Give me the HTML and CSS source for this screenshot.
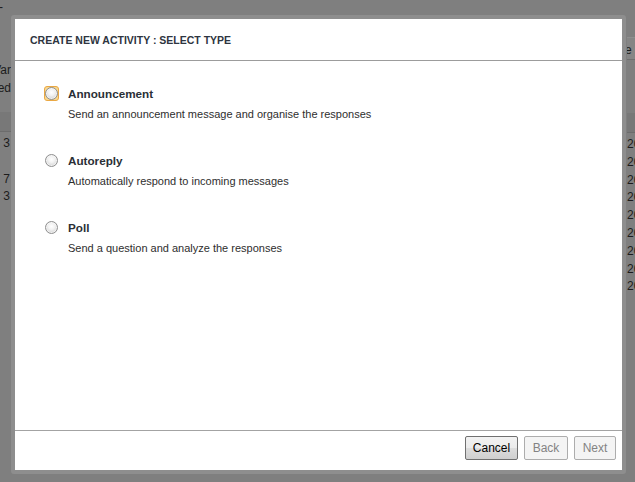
FILE: index.html
```html
<!DOCTYPE html>
<html lang="en">
<head>
<meta charset="utf-8">
<title>Create new activity</title>
<link rel="stylesheet" href="styles.css">
</head>
<body>
<div class="backdrop">
  <div class="bg-left">
    <div class="bg-dash">-</div>
    <div class="bg-text bg-var">Var</div>
    <div class="bg-text">ed</div>
    <div class="bg-band bg-band-l"></div>
    <div class="bg-row">3</div>
    <div class="bg-row bg-empty"></div>
    <div class="bg-row">7</div>
    <div class="bg-row">3</div>
  </div>
  <div class="bg-right">
    <div class="bg-box">e a</div>
    <div class="bg-band bg-band-r"></div>
    <div class="bg-row">20</div>
    <div class="bg-row">20</div>
    <div class="bg-row">20</div>
    <div class="bg-row">20</div>
    <div class="bg-row">20</div>
    <div class="bg-row">20</div>
    <div class="bg-row">20</div>
    <div class="bg-row">20</div>
    <div class="bg-row">20</div>
  </div>
</div>

<div class="dialog">
  <div class="dialog-inner">
    <div class="dialog-header">CREATE NEW ACTIVITY : SELECT TYPE</div>
    <div class="dialog-body">
      <div class="option">
        <span class="radio-wrap focused"><span class="radio"></span></span>
        <div class="option-text">
          <div class="option-title">Announcement</div>
          <div class="option-desc">Send an announcement message and organise the responses</div>
        </div>
      </div>
      <div class="option">
        <span class="radio-wrap"><span class="radio"></span></span>
        <div class="option-text">
          <div class="option-title">Autoreply</div>
          <div class="option-desc">Automatically respond to incoming messages</div>
        </div>
      </div>
      <div class="option">
        <span class="radio-wrap"><span class="radio"></span></span>
        <div class="option-text">
          <div class="option-title">Poll</div>
          <div class="option-desc">Send a question and analyze the responses</div>
        </div>
      </div>
    </div>
    <div class="dialog-footer">
      <button class="btn btn-cancel">Cancel</button>
      <button class="btn btn-back disabled">Back</button>
      <button class="btn btn-next disabled">Next</button>
    </div>
  </div>
</div>
</body>
</html>
```
FILE: styles.css
```css
html, body {
  margin: 0;
  padding: 0;
  height: 482px;
  overflow: hidden;
}
body {
  background: #7f7f7f;
  font-family: "Liberation Sans", Arial, sans-serif;
  position: relative;
}

/* dimmed page behind the modal */
.backdrop {
  display: flex;
  justify-content: space-between;
  height: 482px;
  color: #1c1c1c;
  font-size: 12px;
}
.bg-left {
  width: 11px;
  overflow: hidden;
  display: flex;
  flex-direction: column;
  align-items: flex-end;
}
.bg-right {
  width: 8px;
  overflow: hidden;
  display: flex;
  flex-direction: column;
  padding-top: 37px;
}
.bg-dash {
  height: 14px;
  line-height: 14px;
  align-self: flex-start;
  margin-left: -1px;
}
.bg-text {
  height: 18px;
  line-height: 18px;
  white-space: nowrap;
}
.bg-var {
  margin-top: 47px;
}
.bg-band {
  align-self: stretch;
  height: 19px;
  margin-bottom: 2px;
  background: #787878;
  border-bottom: 1px solid #6c6c6c;
}
.bg-band-l {
  margin-top: 15px;
}
.bg-band-r {
  margin-top: 53px;
}
.bg-row {
  height: 17.8px;
  line-height: 18px;
  white-space: nowrap;
}
.bg-left .bg-row {
  align-self: stretch;
  text-align: right;
  padding-right: 1px;
  box-sizing: border-box;
}
.bg-box {
  height: 21px;
  line-height: 24px;
  background: #858585;
  border-top: 1px solid #8e8e8e;
  border-bottom: 1px solid #6f6f6f;
  white-space: nowrap;
  margin-left: -2px;
}

/* modal dialog */
.dialog {
  position: absolute;
  left: 11px;
  top: 15px;
  width: 607px;
  height: 451px;
  border: 4px solid #8e8e8e;
  border-radius: 3px;
}
.dialog-inner {
  background: #fff;
  height: 100%;
  display: flex;
  flex-direction: column;
}
.dialog-header {
  height: 41px;
  display: flex;
  align-items: center;
  padding-left: 15px;
  border-bottom: 1px solid #9c9c9c;
  font-size: 10.5px;
  font-weight: bold;
  color: #2e3540;
}
.dialog-body {
  flex: 1;
  padding: 26px 0 0 30px;
  display: flex;
  flex-direction: column;
  gap: 33px;
}
.option {
  display: flex;
  gap: 10px;
}
.radio-wrap {
  width: 13px;
  height: 13px;
  display: flex;
  align-items: center;
  justify-content: center;
  box-sizing: border-box;
}
.radio-wrap.focused {
  width: 15px;
  height: 15px;
  margin: -1px;
  border: 1px solid #eaa844;
  border-radius: 3px;
  background: #fbd98f;
}
.radio {
  width: 13px;
  height: 13px;
  box-sizing: border-box;
  border-radius: 50%;
  border: 1px solid #8f8f8f;
  background: radial-gradient(circle at 50% 40%, #ffffff 0%, #f3f3f3 35%, #d6d6d6 75%, #c8c8c8 100%);
  box-shadow: inset 0 0 0 1px rgba(255,255,255,0.6);
}
.option-text {
  display: flex;
  flex-direction: column;
  gap: 6px;
}
.option-title {
  font-size: 11.7px;
  font-weight: bold;
  line-height: 14px;
  color: #2a2f36;
}
.option-desc {
  font-size: 11px;
  line-height: 14px;
  color: #2e2e2e;
}

.dialog-footer {
  border-top: 1px solid #a3a3a3;
  padding: 5px 6px 10px 5px;
  display: flex;
  justify-content: flex-end;
  gap: 6px;
}
.btn {
  height: 24px;
  padding: 0;
  font-family: "Liberation Sans", Arial, sans-serif;
  font-size: 12px;
  color: #000;
  border: 1px solid #707070;
  border-radius: 2px;
  background: linear-gradient(#f2f2f2 0%, #ebebeb 50%, #dddddd 51%, #cfcfcf 100%);
}
.btn-cancel { width: 53px; }
.btn-back { width: 44px; }
.btn-next { width: 42px; }
.btn.disabled {
  color: #838383;
  border-color: #adadad;
  background: #f4f4f4;
}
```
